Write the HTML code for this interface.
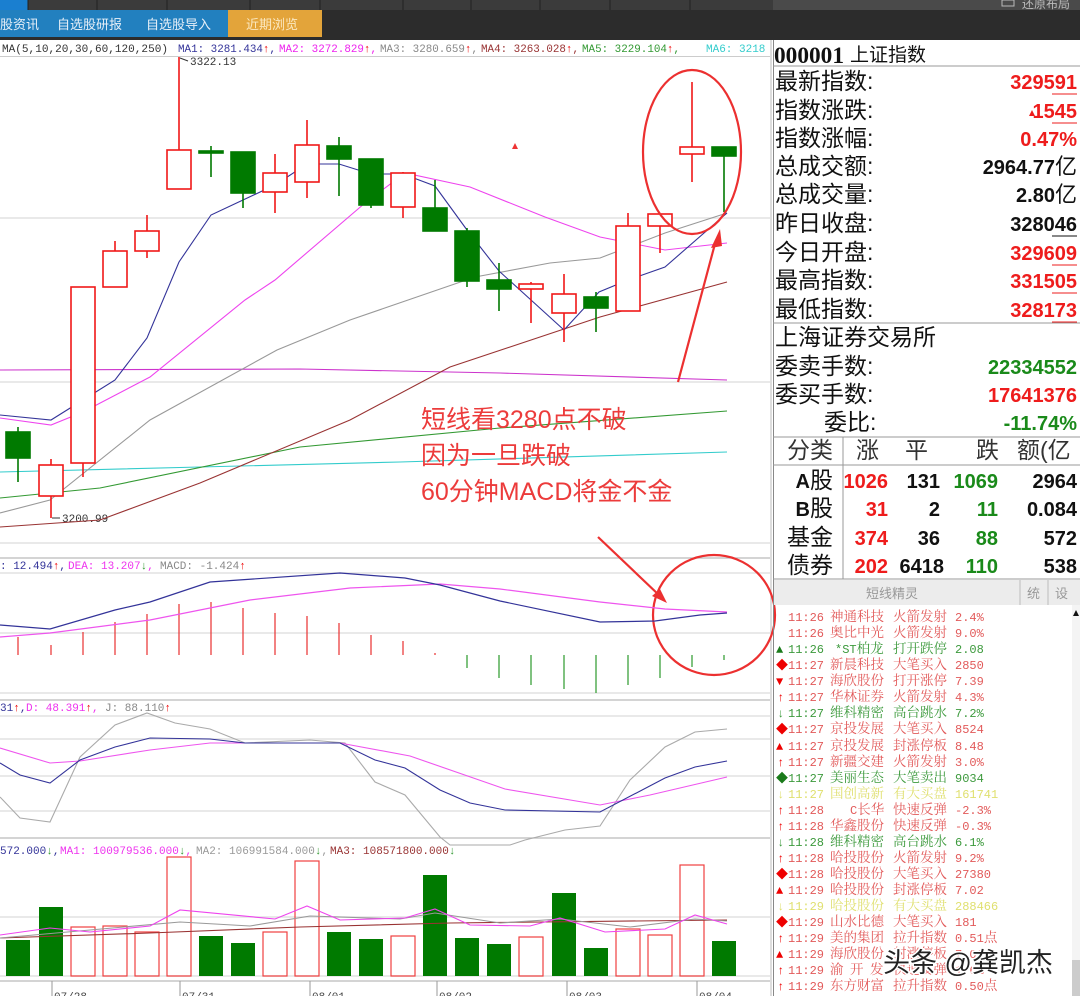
<!DOCTYPE html>
<html><head><meta charset="utf-8"><style>
html,body{margin:0;padding:0;background:#fff;width:1080px;height:996px;overflow:hidden}
svg{display:block}
.m{font-family:"Liberation Mono","Noto Sans CJK SC",monospace;font-size:11px}
.c{font-family:"Liberation Sans","Noto Sans CJK SC",sans-serif}
.l{font-family:"Liberation Mono","Noto Serif CJK SC",monospace;font-size:12px}
.l .n{font-family:"Noto Serif CJK SC","Noto Sans CJK SC",serif;font-size:13.5px}
.rp{font-family:"Liberation Sans","Noto Sans CJK SC",sans-serif;font-size:23px;fill:#111}
.v{font-family:"Liberation Sans","Noto Sans CJK SC",sans-serif;font-size:20px;font-weight:bold}
</style></head><body>
<svg width="1080" height="996" viewBox="0 0 1080 996" xmlns="http://www.w3.org/2000/svg">
<rect x="0" y="0" width="1080" height="10" fill="#3b3b3b"/>
<rect x="0" y="0" width="28" height="10" fill="#1a7fd0"/>
<g stroke="#222" stroke-width="1"><line x1="28" y1="0" x2="28" y2="10"/><line x1="97" y1="0" x2="97" y2="10"/><line x1="167" y1="0" x2="167" y2="10"/><line x1="250" y1="0" x2="250" y2="10"/><line x1="320" y1="0" x2="320" y2="10"/><line x1="403" y1="0" x2="403" y2="10"/><line x1="471" y1="0" x2="471" y2="10"/><line x1="540" y1="0" x2="540" y2="10"/><line x1="610" y1="0" x2="610" y2="10"/><line x1="690" y1="0" x2="690" y2="10"/></g>
<rect x="0" y="10" width="1080" height="30" fill="#2c2c2c"/>
<rect x="0" y="10" width="228" height="27" fill="#2280bf"/>
<rect x="228" y="10" width="94" height="27" fill="#e3a43a"/>
<g class="c" font-size="13" fill="#e8f0f8"><text x="0" y="29">股资讯</text><text x="57" y="29">自选股研报</text><text x="146" y="29">自选股导入</text><text x="246" y="29" fill="#fbe8c0">近期浏览</text></g>
<rect x="773" y="0" width="307" height="10" fill="#4a4a4a"/>
<text x="1022" y="8" class="c" font-size="12" fill="#bbb">还原布局</text>
<rect x="1002" y="0" width="12" height="6" fill="none" stroke="#bbb"/>

<rect x="0" y="40" width="773" height="956" fill="#fff"/>
<line x1="0" y1="56.5" x2="770" y2="56.5" stroke="#ccc"/>
<g stroke="#e2e2e2" stroke-width="1.5"><line x1="0" y1="218" x2="770" y2="218"/><line x1="0" y1="382" x2="770" y2="382"/><line x1="0" y1="543" x2="770" y2="543"/>
<line x1="0" y1="573" x2="770" y2="573"/><line x1="0" y1="633" x2="770" y2="633"/><line x1="0" y1="693" x2="770" y2="693"/>
<line x1="0" y1="716" x2="770" y2="716"/><line x1="0" y1="739" x2="770" y2="739"/><line x1="0" y1="776" x2="770" y2="776"/><line x1="0" y1="811" x2="770" y2="811"/>
<line x1="0" y1="917" x2="770" y2="917"/><line x1="0" y1="976" x2="770" y2="976"/></g>
<g stroke="#bbb" stroke-width="1.2"><line x1="0" y1="558" x2="770" y2="558"/><line x1="0" y1="700" x2="770" y2="700"/><line x1="0" y1="838" x2="770" y2="838"/><line x1="0" y1="981" x2="770" y2="981"/></g>
<line x1="771" y1="40" x2="771" y2="996" stroke="#bbb"/>

<g class="m"><text x="2" y="52" fill="#333" textLength="166" lengthAdjust="spacingAndGlyphs">MA(5,10,20,30,60,120,250)</text>
<text x="178" y="52" fill="#333399" textLength="98" lengthAdjust="spacingAndGlyphs">MA1: 3281.434<tspan fill="#e00">↑</tspan>,</text>
<text x="279" y="52" fill="#ee22ee" textLength="98" lengthAdjust="spacingAndGlyphs">MA2: 3272.829<tspan fill="#e00">↑</tspan>,</text>
<text x="380" y="52" fill="#888" textLength="98" lengthAdjust="spacingAndGlyphs">MA3: 3280.659<tspan fill="#e00">↑</tspan>,</text>
<text x="481" y="52" fill="#993333" textLength="98" lengthAdjust="spacingAndGlyphs">MA4: 3263.028<tspan fill="#e00">↑</tspan>,</text>
<text x="582" y="52" fill="#339933" textLength="98" lengthAdjust="spacingAndGlyphs">MA5: 3229.104<tspan fill="#e00">↑</tspan>,</text>
<text x="706" y="52" fill="#33cccc">MA6: 3218</text>
<text x="190" y="65" fill="#333">3322.13</text>
<text x="62" y="522" fill="#333">3200.99</text></g>
<path d="M180 58 L188 61 M52 518 L60 518" stroke="#333" fill="none"/>

<g fill="none" stroke-width="1.1">
<polyline stroke="#33cccc" points="0,472 200,467 400,462 727,452"/>
<polyline stroke="#339933" points="0,498 100,488 300,447 500,428 727,411"/>
<polyline stroke="#cc33cc" points="0,370 300,369 500,373 727,380"/>
<polyline stroke="#993333" points="0,527 100,520 200,483 350,420 450,367 600,317 727,282"/>
<polyline stroke="#999" points="0,513 50,500 150,420 277,350 350,320 475,277 550,263 600,258 665,233 727,213"/>
<polyline stroke="#ee44ee" points="0,418 51,425 83,412 150,377 245,300 275,280 365,203 405,173 470,187 545,217 600,237 665,250 727,243"/>
<polyline stroke="#333399" points="0,415 51,420 83,400 115,380 147,338 179,262 211,215 243,200 275,185 307,164 339,164 371,174 403,174 435,186 467,230 499,271 531,300 564,330 599,292 628,280 665,267 727,213"/>
</g>

<g stroke-width="1.6">
<g stroke="#007a00" fill="#007a00">
<line x1="18" y1="427" x2="18" y2="482"/><rect x="6" y="432" width="24" height="26"/>
<line x1="211" y1="146" x2="211" y2="177"/><rect x="199" y="151" width="24" height="2"/>
<line x1="243" y1="152" x2="243" y2="208"/><rect x="231" y="152" width="24" height="41"/>
<line x1="339" y1="137" x2="339" y2="196"/><rect x="327" y="146" width="24" height="13"/>
<line x1="371" y1="159" x2="371" y2="208"/><rect x="359" y="159" width="24" height="46"/>
<line x1="435" y1="180" x2="435" y2="231"/><rect x="423" y="208" width="24" height="23"/>
<line x1="467" y1="228" x2="467" y2="287"/><rect x="455" y="231" width="24" height="50"/>
<line x1="499" y1="263" x2="499" y2="311"/><rect x="487" y="280" width="24" height="9"/>
<line x1="596" y1="292" x2="596" y2="332"/><rect x="584" y="297" width="24" height="11"/>
<line x1="724" y1="147" x2="724" y2="212"/><rect x="712" y="147" width="24" height="9"/>
</g>
<g stroke="#f01818" fill="#fff">
<line x1="51" y1="459" x2="51" y2="518"/><rect x="39" y="465" width="24" height="31"/>
<line x1="83" y1="287" x2="83" y2="477"/><rect x="71" y="287" width="24" height="176"/>
<line x1="115" y1="241" x2="115" y2="287"/><rect x="103" y="251" width="24" height="36"/>
<line x1="147" y1="215" x2="147" y2="258"/><rect x="135" y="231" width="24" height="20"/>
<line x1="179" y1="57" x2="179" y2="189"/><rect x="167" y="150" width="24" height="39"/>
<line x1="275" y1="154" x2="275" y2="213"/><rect x="263" y="173" width="24" height="19"/>
<line x1="307" y1="120" x2="307" y2="198"/><rect x="295" y="145" width="24" height="37"/>
<line x1="403" y1="172" x2="403" y2="218"/><rect x="391" y="173" width="24" height="34"/>
<line x1="531" y1="282" x2="531" y2="323"/><rect x="519" y="284" width="24" height="5"/>
<line x1="564" y1="274" x2="564" y2="342"/><rect x="552" y="294" width="24" height="19"/>
<line x1="628" y1="213" x2="628" y2="311"/><rect x="616" y="226" width="24" height="85"/>
<line x1="660" y1="214" x2="660" y2="253"/><rect x="648" y="214" width="24" height="12"/>
<line x1="692" y1="82" x2="692" y2="182"/><rect x="680" y="147" width="24" height="7"/>
</g></g>
<path d="M512 149 L515 143 L518 149 Z" fill="#e33"/>

<g class="c" font-size="25" fill="#ec3b3b"><text x="421" y="428">短线看3280点不破</text><text x="421" y="464">因为一旦跌破</text><text x="421" y="500">60分钟MACD将金不金</text></g>
<g stroke="#ec3030" fill="none" stroke-width="2.2">
<ellipse cx="692" cy="152" rx="49" ry="82"/>
<ellipse cx="714" cy="615" rx="61" ry="60"/>
<line x1="678" y1="382" x2="716" y2="240"/>
<line x1="598" y1="537" x2="660" y2="596"/>
</g>
<path d="M720 229 L711 248 L722 246 Z" fill="#ec3030"/>
<path d="M667 603 L652 596 L660 589 Z" fill="#ec3030"/>

<g class="m"><text x="0" y="569" fill="#333399">: 12.494<tspan fill="#e00">↑</tspan>,</text><text x="68" y="569" fill="#ee33ee">DEA: 13.207<tspan fill="#393">↓</tspan>,</text><text x="160" y="569" fill="#888">MACD: -1.424<tspan fill="#e00">↑</tspan></text></g>
<g stroke="#e83030" stroke-width="1.2">
<line x1="18" y1="637" x2="18" y2="655"/><line x1="51" y1="645" x2="51" y2="655"/><line x1="83" y1="632" x2="83" y2="655"/><line x1="115" y1="622" x2="115" y2="655"/><line x1="147" y1="614" x2="147" y2="655"/><line x1="179" y1="604" x2="179" y2="655"/><line x1="211" y1="602" x2="211" y2="655"/><line x1="243" y1="608" x2="243" y2="655"/><line x1="275" y1="613" x2="275" y2="655"/><line x1="307" y1="616" x2="307" y2="655"/><line x1="339" y1="623" x2="339" y2="655"/><line x1="371" y1="635" x2="371" y2="655"/><line x1="403" y1="641" x2="403" y2="655"/><line x1="435" y1="653" x2="435" y2="655"/></g>
<g stroke="#2a9a2a" stroke-width="1.2">
<line x1="467" y1="655" x2="467" y2="668"/><line x1="499" y1="655" x2="499" y2="678"/><line x1="531" y1="655" x2="531" y2="685"/><line x1="564" y1="655" x2="564" y2="689"/><line x1="596" y1="655" x2="596" y2="693"/><line x1="628" y1="655" x2="628" y2="685"/><line x1="660" y1="655" x2="660" y2="678"/><line x1="692" y1="655" x2="692" y2="667"/><line x1="724" y1="655" x2="724" y2="660"/></g>
<g fill="none" stroke-width="1.2">
<polyline stroke="#ee55ee" points="0,637 50,633 150,620 250,600 350,588 440,584 500,589 600,602 665,609 727,612"/>
<polyline stroke="#333399" points="0,625 50,629 115,610 150,602 210,582 340,573 405,578 440,585 500,601 600,622 655,621 700,615 727,613"/>
</g>

<g class="m"><text x="0" y="711" fill="#333399">31<tspan fill="#e00">↑</tspan>,</text><text x="26" y="711" fill="#ee33ee">D: 48.391<tspan fill="#e00">↑</tspan>,</text><text x="105" y="711" fill="#888">J: 88.110<tspan fill="#e00">↑</tspan></text></g>
<g fill="none" stroke-width="1.1">
<polyline stroke="#aaa" points="0,797 20,818 50,822 80,757 115,725 147,713 175,723 210,729 245,743 310,740 345,743 375,782 405,795 440,837 450,845 510,845 525,840 565,830 600,826 630,780 665,747 695,732 727,729"/>
<polyline stroke="#ee55ee" points="0,748 50,763 80,761 150,750 210,743 340,743 410,756 505,789 600,805 650,795 727,777"/>
<polyline stroke="#333399" points="0,763 20,775 50,783 80,760 115,747 150,738 210,739 245,743 340,743 375,760 405,768 440,790 470,803 505,810 600,812 665,778 695,767 727,761"/>
</g>

<g class="m"><text x="0" y="854" fill="#333399">572.000<tspan fill="#393">↓</tspan>,</text><text x="60" y="854" fill="#ee33ee">MA1: 100979536.000<tspan fill="#393">↓</tspan>,</text><text x="196" y="854" fill="#999">MA2: 106991584.000<tspan fill="#393">↓</tspan>,</text><text x="330" y="854" fill="#993333">MA3: 108571800.000<tspan fill="#393">↓</tspan></text></g>
<g fill="#007a00">
<rect x="6" y="940" width="24" height="36"/><rect x="39" y="907" width="24" height="69"/><rect x="199" y="936" width="24" height="40"/><rect x="231" y="943" width="24" height="33"/><rect x="327" y="932" width="24" height="44"/><rect x="359" y="939" width="24" height="37"/><rect x="423" y="875" width="24" height="101"/><rect x="455" y="938" width="24" height="38"/><rect x="487" y="944" width="24" height="32"/><rect x="552" y="893" width="24" height="83"/><rect x="584" y="948" width="24" height="28"/><rect x="712" y="941" width="24" height="35"/></g>
<g fill="none" stroke="#f04040" stroke-width="1.2">
<rect x="71" y="927" width="24" height="49"/><rect x="103" y="926" width="24" height="50"/><rect x="135" y="932" width="24" height="44"/><rect x="167" y="857" width="24" height="119"/><rect x="263" y="932" width="24" height="44"/><rect x="295" y="861" width="24" height="115"/><rect x="391" y="936" width="24" height="40"/><rect x="519" y="937" width="24" height="39"/><rect x="616" y="929" width="24" height="47"/><rect x="648" y="935" width="24" height="41"/><rect x="680" y="865" width="24" height="111"/></g>
<g fill="none" stroke-width="1.1">
<polyline stroke="#993333" points="0,938 150,933 300,927 450,923 727,920"/>
<polyline stroke="#999" points="0,938 180,922 250,926 310,916 400,919 435,913 500,923 560,919 630,927 695,919 727,921"/>
<polyline stroke="#ee44ee" points="0,935 50,928 90,932 150,926 180,910 275,919 307,906 340,920 405,918 435,909 470,925 530,926 560,918 605,932 665,929 695,915 727,924"/>
</g>
<g stroke="#999"><line x1="52" y1="981" x2="52" y2="996"/><line x1="180" y1="981" x2="180" y2="996"/><line x1="310" y1="981" x2="310" y2="996"/><line x1="437" y1="981" x2="437" y2="996"/><line x1="567" y1="981" x2="567" y2="996"/><line x1="697" y1="981" x2="697" y2="996"/></g>
<g class="m" font-size="14" fill="#444"><text x="54" y="1000">07/28</text><text x="182" y="1000">07/31</text><text x="312" y="1000">08/01</text><text x="439" y="1000">08/02</text><text x="569" y="1000">08/03</text><text x="699" y="1000">08/04</text></g>

<rect x="773" y="10" width="307" height="30" fill="#2c2c2c"/>
<line x1="773.5" y1="40" x2="773.5" y2="996" stroke="#888"/>
<text x="774" y="63" font-family="Liberation Serif,serif" font-weight="bold" font-size="23" fill="#111" textLength="70" lengthAdjust="spacingAndGlyphs">000001</text>
<text x="850" y="61" class="c" font-size="19" fill="#111">上证指数</text>
<g stroke="#999"><line x1="773" y1="66" x2="1080" y2="66"/><line x1="773" y1="323" x2="1080" y2="323"/><line x1="773" y1="437" x2="1080" y2="437"/><line x1="773" y1="465" x2="1080" y2="465"/><line x1="773" y1="579" x2="1080" y2="579"/><line x1="843" y1="437" x2="843" y2="579"/></g>
<g class="rp">
<text x="775" y="89">最新指数:</text><text x="775" y="118">指数涨跌:</text><text x="775" y="146">指数涨幅:</text><text x="775" y="174">总成交额:</text><text x="775" y="202">总成交量:</text><text x="775" y="231">昨日收盘:</text><text x="775" y="260">今日开盘:</text><text x="775" y="288">最高指数:</text><text x="775" y="317">最低指数:</text>
<text x="775" y="345">上海证券交易所</text><text x="775" y="374">委卖手数:</text><text x="775" y="402">委买手数:</text><text x="824" y="430">委比:</text>
<text x="787" y="458" fill="#333">分类</text><text x="856" y="458" fill="#333">涨</text><text x="905" y="458" fill="#333">平</text><text x="976" y="458" fill="#333">跌</text><text x="1017" y="458" fill="#333">额(亿</text>
<text x="810" y="488">股</text><text x="810" y="516">股</text><text x="787" y="545">基金</text><text x="787" y="573">债券</text>
</g>
<g class="v" text-anchor="end">
<text x="1077" y="89" fill="#ee1c1c">329591</text><text x="1077" y="118" fill="#ee1c1c">1545</text><text x="1077" y="146" fill="#ee1c1c">0.47%</text>
<text x="1077" y="174" fill="#111">2964.77<tspan font-weight="normal" font-size="22">亿</tspan></text><text x="1077" y="202" fill="#111">2.80<tspan font-weight="normal" font-size="22">亿</tspan></text>
<text x="1077" y="231" fill="#111">328046</text><text x="1077" y="260" fill="#ee1c1c">329609</text><text x="1077" y="288" fill="#ee1c1c">331505</text><text x="1077" y="317" fill="#ee1c1c">328173</text>
<text x="1077" y="374" fill="#1a8a1a">22334552</text><text x="1077" y="402" fill="#ee1c1c">17641376</text><text x="1077" y="430" fill="#1a8a1a">-11.74%</text>
<text x="810" y="488" fill="#111">A</text><text x="810" y="516" fill="#111">B</text>
<text x="888" y="488" fill="#ee1c1c">1026</text><text x="940" y="488" fill="#111">131</text><text x="998" y="488" fill="#1a8a1a">1069</text><text x="1077" y="488" fill="#111">2964</text>
<text x="888" y="516" fill="#ee1c1c">31</text><text x="940" y="516" fill="#111">2</text><text x="998" y="516" fill="#1a8a1a">11</text><text x="1077" y="516" fill="#111">0.084</text>
<text x="888" y="545" fill="#ee1c1c">374</text><text x="940" y="545" fill="#111">36</text><text x="998" y="545" fill="#1a8a1a">88</text><text x="1077" y="545" fill="#111">572</text>
<text x="888" y="573" fill="#ee1c1c">202</text><text x="944" y="573" fill="#111">6418</text><text x="998" y="573" fill="#1a8a1a">110</text><text x="1077" y="573" fill="#111">538</text>
</g>
<path d="M1029 116 L1032 110 L1035 116 Z" fill="#ee1c1c"/>
<g stroke="#ee1c1c" stroke-width="1"><line x1="1052" y1="94" x2="1077" y2="94"/><line x1="1052" y1="123" x2="1077" y2="123"/><line x1="1052" y1="265" x2="1077" y2="265"/><line x1="1052" y1="293" x2="1077" y2="293"/><line x1="1052" y1="322" x2="1077" y2="322"/></g>
<line x1="1052" y1="236" x2="1077" y2="236" stroke="#111"/>

<rect x="774" y="580" width="306" height="25" fill="#ececec"/>
<line x1="1020" y1="580" x2="1020" y2="605" stroke="#bbb"/><line x1="1048" y1="580" x2="1048" y2="605" stroke="#bbb"/>
<g class="c" font-size="13" fill="#999"><text x="866" y="598">短线精灵</text><text x="1027" y="598">统</text><text x="1055" y="598">设</text></g>
<rect x="1072" y="605" width="8" height="391" fill="#f4f4f4"/>
<rect x="1072" y="960" width="8" height="36" fill="#ccc"/>
<path d="M1073 616 L1076 610 L1079 616 Z" fill="#111"/>

<g class="l">
<g fill="#e25a5a"><text y="621"><tspan x="788">11:26</tspan><tspan class="n" x="830">神通科技</tspan><tspan class="n" x="893">火箭发射</tspan><tspan x="955">2.4%</tspan></text>
<text y="637"><tspan x="788">11:26</tspan><tspan class="n" x="830">奥比中光</tspan><tspan class="n" x="893">火箭发射</tspan><tspan x="955">9.0%</tspan></text></g>
<text y="653" fill="#3d9a3d"><tspan x="776" fill="#1a7a1a">▲</tspan><tspan x="788">11:26</tspan><tspan x="835">*ST</tspan><tspan class="n">柏龙</tspan><tspan class="n" x="893">打开跌停</tspan><tspan x="955">2.08</tspan></text>
<g fill="#e25a5a">
<text y="669"><tspan x="776" fill="#e00">◆</tspan><tspan x="788">11:27</tspan><tspan class="n" x="830">新晨科技</tspan><tspan class="n" x="893">大笔买入</tspan><tspan x="955">2850</tspan></text>
<text y="685"><tspan x="776" fill="#e00">▼</tspan><tspan x="788">11:27</tspan><tspan class="n" x="830">海欣股份</tspan><tspan class="n" x="893">打开涨停</tspan><tspan x="955">7.39</tspan></text>
<text y="701"><tspan x="777" fill="#e00">↑</tspan><tspan x="788">11:27</tspan><tspan class="n" x="830">华林证券</tspan><tspan class="n" x="893">火箭发射</tspan><tspan x="955">4.3%</tspan></text></g>
<text y="717" fill="#3d9a3d"><tspan x="777">↓</tspan><tspan x="788">11:27</tspan><tspan class="n" x="830">维科精密</tspan><tspan class="n" x="893">高台跳水</tspan><tspan x="955">7.2%</tspan></text>
<g fill="#e25a5a">
<text y="733"><tspan x="776" fill="#e00">◆</tspan><tspan x="788">11:27</tspan><tspan class="n" x="830">京投发展</tspan><tspan class="n" x="893">大笔买入</tspan><tspan x="955">8524</tspan></text>
<text y="750"><tspan x="776" fill="#e00">▲</tspan><tspan x="788">11:27</tspan><tspan class="n" x="830">京投发展</tspan><tspan class="n" x="893">封涨停板</tspan><tspan x="955">8.48</tspan></text>
<text y="766"><tspan x="777" fill="#e00">↑</tspan><tspan x="788">11:27</tspan><tspan class="n" x="830">新疆交建</tspan><tspan class="n" x="893">火箭发射</tspan><tspan x="955">3.0%</tspan></text></g>
<text y="782" fill="#3d9a3d"><tspan x="776" fill="#1a7a1a">◆</tspan><tspan x="788">11:27</tspan><tspan class="n" x="830">美丽生态</tspan><tspan class="n" x="893">大笔卖出</tspan><tspan x="955">9034</tspan></text>
<text y="798" fill="#e0e070"><tspan x="777">↓</tspan><tspan x="788">11:27</tspan><tspan class="n" x="830">国创高新</tspan><tspan class="n" x="893">有大买盘</tspan><tspan x="955">161741</tspan></text>
<g fill="#e25a5a">
<text y="814"><tspan x="777" fill="#e00">↑</tspan><tspan x="788">11:28</tspan><tspan x="850">C</tspan><tspan class="n">长华</tspan><tspan class="n" x="893">快速反弹</tspan><tspan x="955">-2.3%</tspan></text>
<text y="830"><tspan x="777" fill="#e00">↑</tspan><tspan x="788">11:28</tspan><tspan class="n" x="830">华鑫股份</tspan><tspan class="n" x="893">快速反弹</tspan><tspan x="955">-0.3%</tspan></text></g>
<text y="846" fill="#3d9a3d"><tspan x="777">↓</tspan><tspan x="788">11:28</tspan><tspan class="n" x="830">维科精密</tspan><tspan class="n" x="893">高台跳水</tspan><tspan x="955">6.1%</tspan></text>
<g fill="#e25a5a">
<text y="862"><tspan x="777" fill="#e00">↑</tspan><tspan x="788">11:28</tspan><tspan class="n" x="830">哈投股份</tspan><tspan class="n" x="893">火箭发射</tspan><tspan x="955">9.2%</tspan></text>
<text y="878"><tspan x="776" fill="#e00">◆</tspan><tspan x="788">11:28</tspan><tspan class="n" x="830">哈投股份</tspan><tspan class="n" x="893">大笔买入</tspan><tspan x="955">27380</tspan></text>
<text y="894"><tspan x="776" fill="#e00">▲</tspan><tspan x="788">11:29</tspan><tspan class="n" x="830">哈投股份</tspan><tspan class="n" x="893">封涨停板</tspan><tspan x="955">7.02</tspan></text></g>
<text y="910" fill="#e0e070"><tspan x="777">↓</tspan><tspan x="788">11:29</tspan><tspan class="n" x="830">哈投股份</tspan><tspan class="n" x="893">有大买盘</tspan><tspan x="955">288466</tspan></text>
<g fill="#e25a5a">
<text y="926"><tspan x="776" fill="#e00">◆</tspan><tspan x="788">11:29</tspan><tspan class="n" x="830">山水比德</tspan><tspan class="n" x="893">大笔买入</tspan><tspan x="955">181</tspan></text>
<text y="942"><tspan x="777" fill="#e00">↑</tspan><tspan x="788">11:29</tspan><tspan class="n" x="830">美的集团</tspan><tspan class="n" x="893">拉升指数</tspan><tspan x="955">0.51</tspan><tspan class="n">点</tspan></text>
<text y="958"><tspan x="776" fill="#e00">▲</tspan><tspan x="788">11:29</tspan><tspan class="n" x="830">海欣股份</tspan><tspan class="n" x="893">封涨停板</tspan><tspan x="955">7.02</tspan></text>
<text y="974"><tspan x="777" fill="#e00">↑</tspan><tspan x="788">11:29</tspan><tspan class="n" x="830">渝</tspan><tspan class="n" x="850">开</tspan><tspan class="n" x="870">发</tspan><tspan class="n" x="893">快速反弹</tspan><tspan x="955">1.6%</tspan></text>
<text y="990"><tspan x="777" fill="#e00">↑</tspan><tspan x="788">11:29</tspan><tspan class="n" x="830">东方财富</tspan><tspan class="n" x="893">拉升指数</tspan><tspan x="955">0.50</tspan><tspan class="n">点</tspan></text></g>
</g>
<text x="883" y="972" class="c" font-size="27" fill="#222" stroke="#fff" stroke-width="3" paint-order="stroke">头条 @龚凯杰</text>
</svg>
</body></html>
